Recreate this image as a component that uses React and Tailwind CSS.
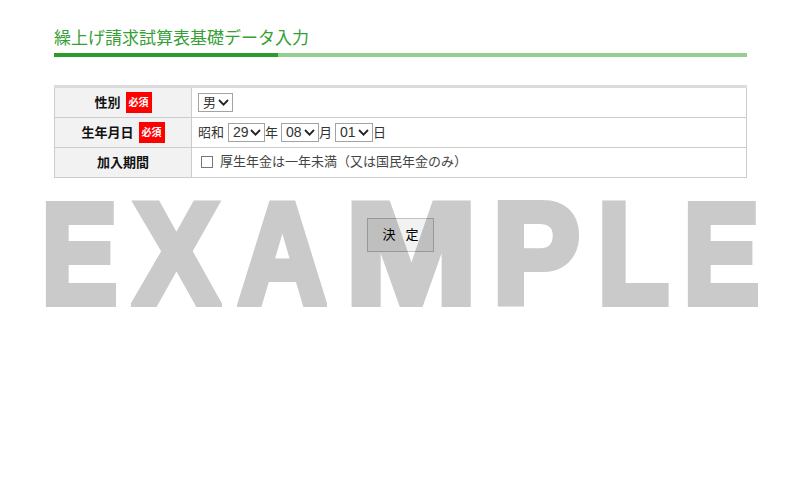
import React from 'react';

const jp = { fontFamily: '"Liberation Sans", "Noto Sans CJK JP", sans-serif' };

const watermark = [
  { ch: 'E', box: 'w-[68px]', scale: 'scale-x-[0.8]' },
  { ch: 'X', box: 'ml-[18px] w-[90px]', scale: 'scale-x-[0.89]' },
  { ch: 'A', box: 'ml-[14px] w-[95px]', scale: 'scale-x-[0.86]' },
  { ch: 'M', box: 'ml-[22px] w-[118px]', scale: 'scale-x-[1.11]' },
  { ch: 'P', box: 'ml-[27px] w-[78px]', scale: 'scale-x-[0.92]' },
  { ch: 'L', box: 'ml-[25px] w-[66px]', scale: 'scale-x-[0.82]' },
  { ch: 'E', box: 'ml-[21px] w-[68px]', scale: 'scale-x-[0.8]' },
];

function Chevron() {
  return (
    <svg width="11" height="7" viewBox="0 0 11 7" className="ml-auto">
      <path d="M1 1 L5.5 5.6 L10 1" fill="none" stroke="#222" strokeWidth="1.8" />
    </svg>
  );
}

function FakeSelect({ value, width, size = 'text-[14px]' }) {
  return (
    <span
      className={`inline-flex h-[19px] items-center border border-[#a3a3a3] bg-white pl-[4px] pr-[3px] text-[#333] ${size} ${width}`}
    >
      {value}
      <Chevron />
    </span>
  );
}

function Required() {
  return (
    <span className="ml-[5px] inline-flex h-[21px] w-[26px] items-center justify-center bg-[#ff0000] text-[10px] font-bold text-white">
      必須
    </span>
  );
}

export default function App() {
  return (
    <div className="relative h-[500px] w-[800px] overflow-hidden bg-white" style={jp}>
      {/* watermark behind the content */}
      <div
        className="pointer-events-none absolute left-[45px] top-[183px] flex text-[142px] font-bold leading-none text-[#cacaca] [-webkit-text-stroke:8px_#cacaca]"
        style={{ fontFamily: '"Liberation Sans", sans-serif' }}
      >
        {watermark.map((l, i) => (
          <div key={i} className={`flex justify-center ${l.box}`}>
            <span className={`inline-block ${l.scale}`}>{l.ch}</span>
          </div>
        ))}
      </div>

      <div className="relative ml-[54px] w-[693px] pt-[27px]">
        <h1 className="text-[17px] leading-[24px] text-[#35a035]">繰上げ請求試算表基礎データ入力</h1>
        <div className="mt-[2px] flex h-[4px]">
          <div className="w-[224px] bg-[#2c9a2c]" />
          <div className="flex-1 bg-[#93cf93]" />
        </div>

        <table className="mt-[28px] w-full border-collapse border-t-[3px] border-t-[#dcdcdc] text-[13px]">
          <tbody>
            <tr className="h-[31px]">
              <th className="w-[137px] border border-[#cccccc] bg-[#f2f2f2] font-bold text-[#111]">
                <span className="inline-flex items-center">性別<Required /></span>
              </th>
              <td className="border border-[#cccccc] pl-[6px]">
                <FakeSelect value="男" width="w-[35px]" size="text-[13px]" />
              </td>
            </tr>
            <tr className="h-[30px]">
              <th className="border border-[#cccccc] bg-[#f2f2f2] font-bold text-[#111]">
                <span className="inline-flex items-center">生年月日<Required /></span>
              </th>
              <td className="border border-[#cccccc] pl-[6px] text-[#333]">
                <span className="inline-flex items-center">
                  昭和<span className="w-[4px]" />
                  <FakeSelect value="29" width="w-[37px]" />年<span className="w-[3px]" />
                  <FakeSelect value="08" width="w-[38px]" />月<span className="w-[3px]" />
                  <FakeSelect value="01" width="w-[38px]" />日
                </span>
              </td>
            </tr>
            <tr className="h-[30px]">
              <th className="border border-[#cccccc] bg-[#f2f2f2] font-bold text-[#111]">加入期間</th>
              <td className="border border-[#cccccc] pl-[9px] text-[#444]">
                <span className="inline-flex items-center">
                  <span className="mr-[7px] inline-block h-[12px] w-[12px] border border-[#777]" />
                  厚生年金は一年未満（又は国民年金のみ）
                </span>
              </td>
            </tr>
          </tbody>
        </table>

        <div className="mt-[40px] flex justify-center">
          <button className="relative h-[34px] w-[67px] border border-black/20 bg-black/5 pl-[10px] text-[13px] tracking-[10px] text-black">
            決定
          </button>
        </div>
      </div>
    </div>
  );
}
